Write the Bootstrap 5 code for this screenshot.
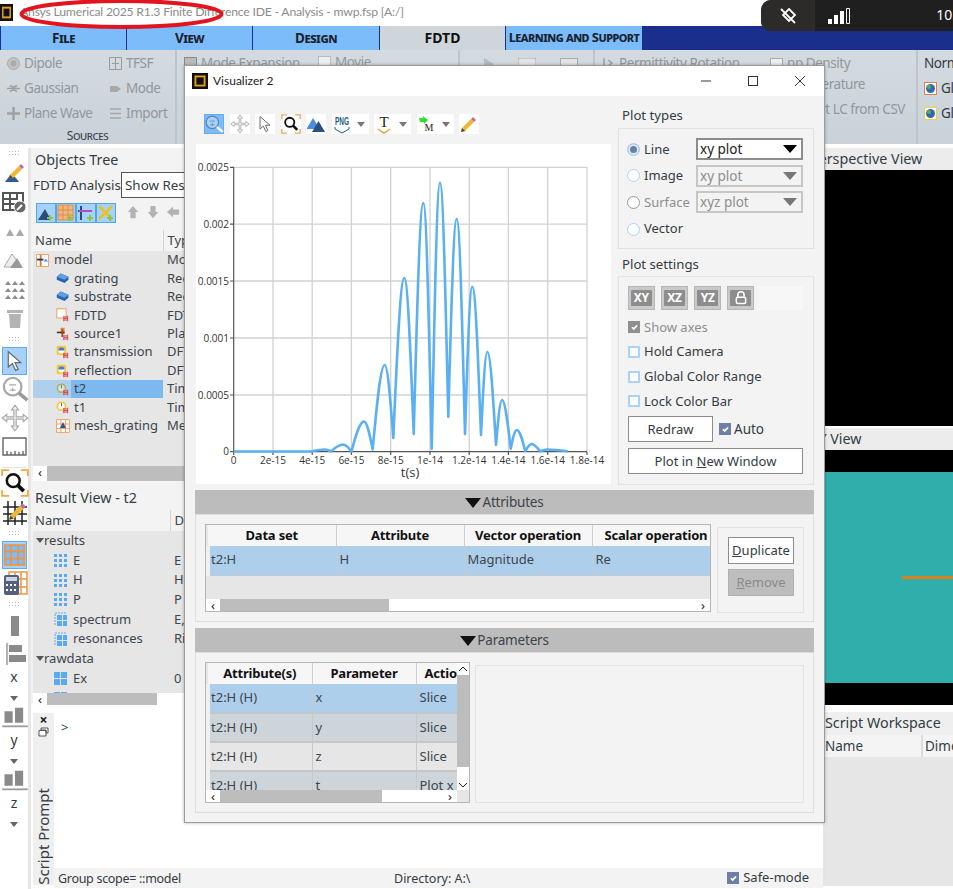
<!DOCTYPE html>
<html lang="en">
<head>
<meta charset="UTF-8" />
<meta name="viewport" content="width=device-width, initial-scale=1" />
<title>Ansys Lumerical - Visualizer</title>
<link href="https://cdn.jsdelivr.net/npm/bootstrap@5.3.0/dist/css/bootstrap.min.css" rel="stylesheet" />
<style>
  html, body { height: 100%; }
  body { width: 953px; height: 889px; overflow: hidden; position: relative; background: #fff; color: #333c44; font-family: "Noto Sans", sans-serif; font-size: 13px; line-height: 1.2; }
  svg { display: block; flex: none; }

  /* main window chrome */
  .titlebar { height: 26px; padding-bottom: 2px; font-family: Lato, sans-serif; font-size: 12.2px; letter-spacing: -.2px; color: #8b8b8b; gap: 7px; }
  .app-tabs { height: 24px; background: #1a2f8c; padding-left: 1px; }
  .app-tab { width: 125px; flex: none; margin-right: 1px; background: #7dbcfa; color: #17222e; font-weight: 700; font-variant: small-caps; font-size: 13.5px; letter-spacing: -.5px; }
  .app-tab:nth-child(3) { width: 126px; }
  .app-tab.active { background: #ced6dc; color: #111; font-variant: normal; font-size: 14px; letter-spacing: 0; }
  .app-tab.wide { width: 136px; white-space: nowrap; font-size: 13px; letter-spacing: -.55px; }
  .ribbon { height: 94px; background: linear-gradient(#d4dbe0, #c9d2d9); color: #92979b; font-size: 13.5px; letter-spacing: -.45px; }
  .rib-group { height: 94px; flex: none; border-right: 2px solid #bcc5cc; position: relative; }
  .rib-sources { width: 177px; }
  .rib-modes { width: 283px; }
  .rib-play { width: 135px; }
  .rib-perm { width: 323px; }
  .rib-item { height: 25px; white-space: nowrap; }
  .rib-item:first-child { margin-top: 1px; }
  .rib-label { position: absolute; left: 0; right: 0; bottom: 0; text-align: center; color: #3a444c; font-variant: small-caps; font-size: 12px; letter-spacing: -.4px; line-height: 17px; }
  .rib-col1 { width: 109px; padding-left: 7px; }
  .rib-mode1 { width: 134px; margin-left: 7px; }
  .perm-a { width: 175px; padding-left: 8px; }
  .perm-t { width: 270px; text-align: right; }
  .perm-i { width: 310px; text-align: right; }
  .rib-norm { flex: none; color: #333c44; padding-left: 6px; }
  .work { height: 745px; border-top: 4px solid #fff; }

  /* left tool strip */
  .tools { width: 31px; border-right: 3px solid #e6e6e6; }
  .tool { height: 28.8px; width: 28px; margin-left: 1px; }
  .tool.on { height: 28px; width: 25px; margin-left: 2px; background: #a6d1f8; box-shadow: inset 0 0 0 1px #5cacef; }
  .tool-grip { height: 7px; width: 12px; margin: 3.5px 0 3.5px 8px; background: radial-gradient(#bbb 40%, transparent 45%) 0 0 / 3px 3px; }
  .tool-grip:first-child { margin-top: 1.500px; margin-bottom: 3.500px; }
  .tool-line { height: 7px; width: 24px; margin-left: 2px; border-bottom: 1px solid #e2e2e2; margin-bottom: 1px; }
  .tool-letter { font-size: 14px; height: 20px; width: 28px; text-align: center; }
  .caret-s { width: 0; height: 0; border: 4px solid transparent; border-top: 5px solid #666; border-bottom: 0; margin: 7px auto 2px; }

  /* docks */
  .dock { width: 153px; padding-left: 2px; background: #f3f3f3; overflow: hidden; }
  .dock-title { font-size: 14.3px; padding-left: 2px; height: 24px; line-height: 24px; }
  .dock-tabs { height: 27px; font-size: 13.4px; }
  .dock-tab { padding-top: 5px; width: 88px; white-space: nowrap; flex: none; }
  .dock-tab.res { width: 70px; height: 26px; border: 1px solid #555; background: #fff; padding: 4px 0 0 3px; overflow: hidden; }
  .dock-bar { height: 31px; padding: 4px 0 0 3px; }
  .add-btn { width: 20px; height: 20px; flex: none; background: #a6d1f8; box-shadow: inset 0 0 0 1px #4ea6ee; }
  .move-btns { margin-left: 10px; gap: 6px; }
  .tree { width: 260px; table-layout: fixed; margin: 0; font-size: 13px; }
  .tree > * > tr > * { border: 0; padding: 0; background: transparent; font-weight: 400; color: #3c454c; box-shadow: none; white-space: nowrap; overflow: hidden; vertical-align: middle; }
  .tree > * > tr > *:nth-child(2) { padding-left: 4px; }
  .tree thead th { background: #f3f3f3; height: 21px; padding-left: 2px; border-right: 1px solid #d4d4d4; }
  .tree-wrap { background: #e6e6e6; overflow: hidden; }
  .objects { height: 236px; }
  .objects tbody td { height: 18.4px; }
  .results { height: 183px; }
  .results tbody td { height: 19.7px; }
  .col-obj { width: 130px; }
  .col-res { width: 137px; }
  .tree .sel { background: linear-gradient(90deg, #aed0ec 38px, #7cb9ef 38px); }
  .lvl0 { padding-left: 3px; gap: 5px; }
  .lvl1 { padding-left: 23px; gap: 4px; }
  .grp { padding-left: 3px; }
  .data { padding-left: 20px; gap: 5px; }
  .tw { width: 0; height: 0; border: 4px solid transparent; border-top: 5px solid #555; border-bottom: 0; }
  .hbar { height: 15px; background: #fff; }
  .hbar.sm { height: 12px; }
  .hbar .arrow { width: 14px; text-align: center; font-size: 13px; line-height: 12px; color: #222; flex: none; }
  .hbar .thumb { background: #bdbdbd; }
  .thumb-r { width: 110px; }
  .thumb-a { width: 169px; }
  .thumb-p { width: 162px; }
  .splitter { height: 5px; }
  .console-row { margin-top: 8px; }
  .console { height: 155px; padding: 7px 0 0 7px; }
  .prompt-side { width: 21px; background: #efefef; position: relative; margin-left: 2px; height: 172px; flex: none; }
  .prompt-vert { position: absolute; bottom: 0; left: 0; width: 21px; writing-mode: vertical-rl; transform: rotate(180deg); font-size: 15px; line-height: 21px; white-space: nowrap; }
  .prompt-close { font-size: 14px; font-weight: 700; color: #222; text-align: center; line-height: 14px; }
  .statusbar { height: 20px; background: #f3f3f3; font-size: 13px; padding: 0 14px 0 4px; }
  .st-scope { width: 336px; flex: none; font-size: 12.5px; letter-spacing: -.3px; }
  .st-dir { font-size: 12.5px; }
  .st-safe { margin-left: auto; gap: 4px; }

  /* right docks */
  .right { width: 130px; }
  .view-head { height: 22px; line-height: 22px; background: #ececec; font-size: 14.3px; white-space: nowrap; }
  .view-head span { margin-left: -13px; }
  .black { background: #000; }
  .p-view { height: 256px; margin-bottom: 2px; }
  .x-view { height: 255px; padding: 22px 0; }
  .teal { height: 211px; background: #30aeac; position: relative; }
  .teal i { position: absolute; left: 79px; right: 0; top: 104px; height: 3px; background: #d9801f; }
  .ws { margin-top: 7px; border-left: 2px solid #e4e4e4; }
  .ws-title { height: 23px; line-height: 22px; font-size: 14.3px; background: #efefef; white-space: nowrap; }
  .ws-head { height: 22px; line-height: 22px; background: #f4f4f4; white-space: nowrap; overflow: hidden; font-size: 13.5px; }
  .ws-head div:first-child { width: 98px; flex: none; border-right: 2px solid #ddd; }
  .ws-head div:last-child { padding-left: 2px; }
  .ws-body { height: 129px; background: #e6e6e6; }

  /* floating window */
  .win { position: absolute; left: 184px; top: 65px; width: 641px; height: 758px; background: #f3f3f3; border: 1px solid #9c9c9c; box-shadow: 0 0 3px rgba(0,0,0,.3); }
  .win-title { height: 30px; background: #fff; font-family: Lato, sans-serif; font-size: 12px; color: #222; padding-left: 7px; gap: 5px; }
  .win-ctrl { margin-left: auto; gap: 33px; padding-right: 17px; }
  .win-body { padding: 0 10px; }
  .win-top { height: 394px; }
  .plot-col { width: 416px; padding-left: 1px; flex: none; }
  .v-tools { height: 20px; margin: 18px 0 10px 8px; gap: 5.5px; }
  .v-tool { height: 20px; width: 20px; background: #fff; }
  .v-tool.on { background: #7dbcfa; box-shadow: inset 0 0 0 1px #62aef0; }
  .v-tool.split { width: 37px; gap: 5px; }
  .v-tool .drop { width: 0; height: 0; border: 4px solid transparent; border-top: 5px solid #777; border-bottom: 0; margin-top: 1px; }
  .plot { width: 415px; height: 340px; background: #fff; }
  .chart-txt { font-family: "Open Sans", sans-serif; font-size: 10px; fill: #333; }
  .side-col { width: 196px; margin-left: 7px; flex: none; }
  .gb-label { height: 21px; padding: 2px 0 0 4px; font-size: 13.2px; }
  .gb-types { margin-top: 11px; padding-top: 1px; }
  .gb { border: 1px solid #e2e2e2; }
  .types-box { height: 121px; padding: 7px 10px 0 8px; margin-bottom: 6px; }
  .type-row { height: 26.6px; }
  .type-row label { width: 52px; flex: none; margin-left: 4px; }
  .win .form-check-input { margin: 0; float: none; width: 13px; height: 13px; flex: none; background-color: #fff; border: 1px solid #a9d4f7; border-radius: 50%; opacity: 1; }
  .win .form-check-input.grey { border-color: #999; }
  .win .form-check-input:checked { background-image: none; background-color: #6d7fa4; box-shadow: inset 0 0 0 2px #dcecfa; border-color: #a9d4f7; }
  .win .form-check-input[type=checkbox], .statusbar .form-check-input { border-radius: 0; width: 12px; height: 12px; margin: 0; float: none; flex: none; }
  .win .form-check-input.boxed { background-color: #fff; border: 2px solid #a9d4f7; }
  .chk-on, .statusbar .form-check-input { background-color: #6d7fa4 !important; border: 1px solid #6d7fa4 !important; box-shadow: none !important; opacity: 1; background-size: 11px; background-image: url("data:image/svg+xml,%3csvg xmlns='http://www.w3.org/2000/svg' viewBox='0 0 20 20'%3e%3cpath fill='none' stroke='%23fff' stroke-width='3' d='m6 10 3 3 6-6'/%3e%3c/svg%3e") !important; }
  .chk-off { background-color: #8f8f8f !important; border-color: #8f8f8f !important; }
  .win .form-select { width: 107px; height: 22px; padding: 0 0 0 2px; font-size: 13.5px; line-height: 18px; color: #222; border: 2px solid #8c8c8c; border-radius: 0; box-shadow: none; background-color: #fff; background-size: 16px 10px; background-position: right 3px center; background-image: url("data:image/svg+xml,%3csvg xmlns='http://www.w3.org/2000/svg' viewBox='0 0 16 10'%3e%3cpath d='M1 1h14L8 9z'/%3e%3c/svg%3e"); }
  .win .form-select:disabled { color: #8e8e8e; background-color: #f3f3f3; border-color: #c6c6c6; background-image: url("data:image/svg+xml,%3csvg xmlns='http://www.w3.org/2000/svg' viewBox='0 0 16 10'%3e%3cpath fill='%23777' d='M1 1h14L8 9z'/%3e%3c/svg%3e"); }
  .muted { color: #8e8e8e; }
  .settings-box { height: 209px; padding: 9px 10px 0 9px; }
  .axis-btns { gap: 6.5px; height: 25px; margin-bottom: 4px; }
  .axis-btn, .axis-btn:disabled { width: 27px; height: 24px; background: #c9c9c9; border: 1px solid #b6b6b6; border-radius: 0; padding: 0; opacity: 1; }
  .axis-btn span { display: block; background: #8d8d8d; color: #fff; font-weight: 700; font-size: 12px; line-height: 14px; width: 21px; padding: 1px 0; border-radius: 1px; letter-spacing: -.3px; }
  .axis-btn span svg { margin: 0 auto; }
  .axis-rest { width: 46px; height: 24px; margin-left: -3px; background: #f7f7f7; }
  .set-row { height: 24.7px; gap: 4px; }
  .win .btn-plot { background: #fff; border: 1px solid #8c8c8c; border-radius: 0; color: #333c44; font-size: 13px; padding: 0; line-height: 24px; height: 26px; }
  .redraw { width: 85px; margin-top: 2px; flex: none; }
  .newwin { width: 175px; margin-top: 6px; }
  .auto { gap: 3px; margin: 2px 0 0 6px; font-size: 13.5px; }

  .bar { height: 24px; background: #bcbcbc; gap: 1px; font-size: 13.5px; letter-spacing: -.2px; color: #3c444a; }
  .bar i { width: 0; height: 0; border: 8.500px solid transparent; border-top: 10px solid #111; border-bottom: 0; margin-top: 1px; }
  .pane { border: 1px solid #dedede; padding: 9px; }
  .attrs { height: 108px; }
  .params { height: 161px; }
  .sec-gap { margin-top: 6px; }
  .grid-box { border: 1px solid #b5b5b5; background: #e6e6e6; overflow: hidden; position: relative; flex: none; }
  .attrs .grid-box { width: 506px; height: 88px; }
  .params .grid-box { width: 265px; height: 141px; }
  .gt { table-layout: fixed; margin: 0; font-size: 13px; }
  .gt > * > tr > * { border: 0; border-right: 1px solid #c3cbd1; background: transparent; box-shadow: none; padding: 0 0 0 3px; color: #3c454c; white-space: nowrap; overflow: hidden; vertical-align: middle; }
  .gt thead th { background: #f6f6f6; height: 21px; font-weight: 700; text-align: center; color: #111; border-right: 1px solid #cfcfcf; padding: 0; letter-spacing: -.2px; }
  .gt thead th.last { text-align: left; padding-left: 12px; border-right: 0; }
  .params .gt thead th.last { padding-left: 8px; }
  .gt > tbody > tr > td:first-child { border-left: 4px solid #f0f0f0; padding-left: 1px; }
  .gt tbody tr.s > * { background: #aecfec; }
  .gt tbody tr.g > * { background: #cdd5da; }
  .gt tbody tr.l > * { background: #e6e6e6; }
  .gt tbody td { height: 29px; border-bottom: 2px solid #c3c7ca; }
  .attrs .gt { width: 504px; }
  .attrs .gt tbody td { height: 29px; border-bottom: 1px solid #c3cbd1; }
  .params .gt { width: 252px; }
  .c128a { width: 128px; }
  .c128 { width: 128px; }
  .c120 { width: 120px; }
  .c104a { width: 104px; }
  .c104 { width: 104px; }
  .c44 { width: 44px; }
  .grid-box .hbar { position: absolute; left: 0; bottom: 0; height: 12px; right: 0; }
  .params .hbar { right: 12px; }
  .vbar { position: absolute; right: 0; top: 0; bottom: 12px; width: 12px; background: #fff; }
  .vbar b { display: block; height: 92px; margin-top: 12px; background: #bdbdbd; }
  .vbar svg { position: absolute; left: 1px; }
  .vbar .up { top: 3px; }
  .vbar .dn { bottom: 2px; }
  .corner { position: absolute; right: 0; bottom: 0; width: 12px; height: 12px; background: #e6e6e6; }
  .dup-box { width: 87px; height: 86px; margin: 3px 0 0 6px; padding: 9px 0 0 10px; flex: none; }
  .dup-box .btn { display: block; width: 66px; height: 27px; padding: 0; line-height: 25px; border-radius: 0; font-size: 13px; margin-bottom: 5px; white-space: nowrap; }
  .btn-dup { background: #fff; border: 1px solid #8c8c8c; color: #333c44; }
  .btn-rem:disabled { background: #bdbdbd; border: 1px solid #b0b0b0; color: #8a8a8a; opacity: 1; }
  .par-box { width: 329px; height: 138px; margin: 3px 0 0 5px; flex: none; }

  /* overlays */
  .tray { position: absolute; right: 0; top: 0; width: 192px; height: 31px; background: #1f1f1f; border-radius: 10px 0 0 10px; color: #fff; font-size: 14px; overflow: hidden; }
  .tray-a { width: 54px; height: 31px; background: #2c2b29; }
  .tray-b { margin-left: 13px; }
  .tray-time { margin-left: auto; margin-right: -3px; }
  .oval { position: absolute; left: 10px; top: 0; }
</style>
</head>
<body>

<svg width="0" height="0" class="position-absolute">
  <defs>
    <g id="lum"><rect width="14" height="14" fill="#111"/><rect x="3" y="3" width="8" height="8" fill="none" stroke="#e5a11c" stroke-width="1.6"/></g>
    <path id="badge" d="M10 10v7M15 10v7M10 13.5h5M10 11.5h5M10 15.5h5" stroke="#d8424c" stroke-width="1.2" fill="none"/>
    <symbol id="i-slab" viewBox="0 0 18 18"><path d="M1 6 6 2l10 4v4l-5 4L1 10Z" fill="#2a64b4"/><path d="M1 6 6 2l10 4-5 4Z" fill="#5f9fe2"/></symbol>
    <symbol id="i-fdtd" viewBox="0 0 18 18"><path d="M1 1h12v12H1z" fill="#fff" stroke="#f0a060" stroke-width="1.3"/><use href="#badge"/></symbol>
    <symbol id="i-src" viewBox="0 0 18 18"><path d="M6 1h5v8H6z" fill="#e8882c"/><path d="M1 6h10v2H1z" fill="#334"/><path d="M8 3v10" stroke="#a34a1c" stroke-width="2"/><use href="#badge"/></symbol>
    <symbol id="i-mon" viewBox="0 0 18 18"><rect x="1" y="1" width="12" height="12" rx="2" fill="#f5c52e"/><circle cx="7" cy="7" r="4" fill="#fff"/><path d="M3 7a4 4 0 0 1 8 0" fill="#3f7fd0"/><use href="#badge"/></symbol>
    <symbol id="i-time" viewBox="0 0 18 18"><circle cx="7" cy="8" r="5.2" fill="#fff" stroke="#f5c52e" stroke-width="2"/><path d="M7 8V4" stroke="#333"/><use href="#badge"/></symbol>
    <symbol id="i-time2" viewBox="0 0 18 18"><circle cx="7" cy="8" r="5.2" fill="#d8e6d8" stroke="#a8b06a" stroke-width="2"/><path d="M7 8V4" stroke="#556"/><use href="#badge"/></symbol>
    <symbol id="i-model" viewBox="0 0 14 14"><rect x=".6" y=".6" width="12.8" height="12.8" fill="#fff" stroke="#f0a060"/><path d="M5 1v12" stroke="#e07820" stroke-width="2"/><path d="M1 6h7" stroke="#1f3a70" stroke-width="2"/><path d="m8 8 2.500-3L13 8Z" fill="#4f8fd8"/></symbol>
    <symbol id="i-mesh" viewBox="0 0 14 14"><path d="M.6.6h12.800v12.800H.6zM5 1v12M9.500 1v12M1 5h12M1 9.500h12" fill="#fff" stroke="#f0a060"/><path d="m4 9 3-6 3 6Z" fill="#2b5596"/></symbol>
    <symbol id="i-d3" viewBox="0 0 15 15"><path d="M1 1h3v3H1zM6 1h3v3H6zM11 1h3v3h-3zM1 6h3v3H1zM6 6h3v3H6zM11 6h3v3h-3zM1 11h3v3H1zM6 11h3v3H6zM11 11h3v3h-3z" fill="#5aa9f5"/></symbol>
    <symbol id="i-d2s" viewBox="0 0 15 15"><path d="M4 3h5v5H4zM10 3h4v5h-4zM4 9h5v5H4zM10 9h4v5h-4z" fill="#5aa9f5"/><path d="M2 13V1h11" fill="none" stroke="#5aa9f5" stroke-dasharray="2 1"/></symbol>
    <symbol id="i-d2" viewBox="0 0 15 15"><path d="M1 1h6v6H1zM8 1h6v6H8zM1 8h6v6H1zM8 8h6v6H8z" fill="#5aa9f5"/></symbol>
    <symbol id="i-mag" viewBox="0 0 24 24"><circle cx="10" cy="10" r="7.500" fill="none" stroke="#aaa" stroke-width="2"/><path d="m15.500 15.500 7 6" stroke="#999" stroke-width="3"/><path d="M7 8.500h6M10 11v3M7.500 13h5" stroke="#aaa"/></symbol>
    <symbol id="i-mag-on" viewBox="0 0 24 24"><circle cx="10" cy="10" r="7.500" fill="#a6d1f8" stroke="#5a87b0" stroke-width="1.500"/><path d="m15.500 15.500 7 6" stroke="#fff" stroke-width="3"/><path d="M7 8.500h6M10 11v3M7.500 13h5" stroke="#5a87b0"/></symbol>
    <symbol id="i-arrow" viewBox="0 0 24 24"><path d="M6 3v15l4-3.500 3 6.500 2.500-1-3-6.500h5.500Z" fill="#fff" stroke="#6c6c6c" stroke-width="1.200"/></symbol>
    <symbol id="i-move" viewBox="0 0 24 24"><path d="M12 1l3 4h-2v6h6V9l4 3-4 3v-2h-6v6h2l-3 4-3-4h2v-6H5v2l-4-3 4-3v2h6V5H9Z" fill="#f4f4f4" stroke="#aaa"/></symbol>
    <symbol id="i-zoomf" viewBox="0 0 24 24"><path d="M1 6V1h6M17 1h6v5M1 18v5h6M17 23h6v-5" fill="none" stroke="#f0a84a" stroke-width="1.600"/><circle cx="10.500" cy="10" r="5.500" fill="#fff" stroke="#111" stroke-width="2.200"/><path d="m14.500 14 5 5" stroke="#111" stroke-width="3.200"/></symbol>
    <symbol id="i-peaks" viewBox="0 0 20 20"><path d="m1 14 6-10 5 8-2 3H1Z" fill="#4d8de0"/><path d="m6 18 6.500-11L19 18Z" fill="#2c4f7e"/></symbol>
    <symbol id="i-pencil" viewBox="0 0 20 20"><path d="m3 14 9-9 3 3-9 9-4 1Z" fill="#f2b632"/><path d="m12 5 2-2 3 3-2 2Z" fill="#c46aa0"/><path d="m2 18 1-4 3 3Z" fill="#444"/></symbol>
    <symbol id="i-bar" viewBox="0 0 24 24"><path d="M3 17h7V7H3zM12 17h7V4h-7z" fill="#8a8a8a"/><path d="M1 20h22" stroke="#999" stroke-width="1.500"/></symbol>
  </defs>
</svg>

<div class="d-flex flex-column">
  <div class="titlebar d-flex align-items-center">
    <svg width="13" height="17" viewBox="0 0 14 14" preserveAspectRatio="none"><use href="#lum"/></svg>
    <span>Ansys Lumerical 2025 R1.3 Finite Difference IDE - Analysis - mwp.fsp [A:/]</span>
  </div>

  <div class="app-tabs d-flex">
    <div class="app-tab d-flex align-items-center justify-content-center">File</div>
    <div class="app-tab d-flex align-items-center justify-content-center">View</div>
    <div class="app-tab d-flex align-items-center justify-content-center">Design</div>
    <div class="app-tab active d-flex align-items-center justify-content-center">FDTD</div>
    <div class="app-tab wide d-flex align-items-center justify-content-center">Learning and Support</div>
  </div>

  <div class="ribbon d-flex">
    <div class="rib-group rib-sources d-flex">
      <div class="rib-col1">
        <div class="rib-item d-flex align-items-center gap-1"><svg width="13" height="13" viewBox="0 0 13 13"><circle cx="6.500" cy="6.500" r="6" fill="#c4c4c4" stroke="#a8a8a8"/><circle cx="6.500" cy="6.500" r="3" fill="#aaa"/></svg>Dipole</div>
        <div class="rib-item d-flex align-items-center gap-1"><svg width="13" height="13" viewBox="0 0 13 13"><path d="M0 6.500h13M3 3.500c3 2 4 2 7 0M3 9.500c3-2 4-2 7 0" stroke="#a0a0a0" stroke-width="1.600" fill="none"/></svg>Gaussian</div>
        <div class="rib-item d-flex align-items-center gap-1"><svg width="13" height="13" viewBox="0 0 13 13"><path d="M0 6.500h13M6.500 0v13" stroke="#a0a0a0" stroke-width="2.400"/></svg>Plane Wave</div>
      </div>
      <div>
        <div class="rib-item d-flex align-items-center gap-1"><svg width="13" height="13" viewBox="0 0 13 13"><path d="M.5.500h12v12H.500zM6.500 1v11M3 6.500h7" fill="none" stroke="#9c9c9c"/></svg>TFSF</div>
        <div class="rib-item d-flex align-items-center gap-1"><svg width="13" height="13" viewBox="0 0 13 13"><path d="M1 4h7l4 3-4 3H1Z" fill="#a8a8a8"/></svg>Mode</div>
        <div class="rib-item d-flex align-items-center gap-1"><svg width="13" height="13" viewBox="0 0 13 13"><path d="M1 2h11M1 6.500h11M1 11h11" stroke="#a6a6a6" stroke-width="1.500"/></svg>Import</div>
      </div>
      <div class="rib-label">Sources</div>
    </div>
    <div class="rib-group rib-modes d-flex">
      <div class="rib-item rib-mode1 d-flex align-items-center gap-1"><svg width="13" height="13"><rect x=".5" y=".5" width="12" height="12" fill="#bbb" stroke="#888"/></svg>Mode Expansion</div>
      <div class="rib-item d-flex align-items-center gap-1"><svg width="13" height="13"><rect x=".5" y=".5" width="12" height="12" fill="#eee" stroke="#bbb"/></svg>Movie</div>
    </div>
    <div class="rib-group rib-play d-flex gap-4 pt-2 ps-4">
      <svg width="10" height="12" viewBox="0 0 10 12"><path d="M0 0l10 6-10 6Z" fill="#b4bbc0"/></svg>
      <svg width="18" height="14"><rect width="18" height="14" rx="2" fill="#e4e4e4" stroke="#aaa"/></svg>
      <svg width="18" height="14"><rect x=".5" y=".5" width="17" height="13" fill="#e4e4e4" stroke="#aaa"/></svg>
    </div>
    <div class="rib-group rib-perm">
      <div class="rib-item d-flex align-items-center">
        <div class="perm-a d-flex align-items-center gap-1"><svg width="12" height="13" viewBox="0 0 12 13"><path d="M1 1v11M5 3l4 3-4 3" stroke="#9a9a9a" fill="none" stroke-width="1.400"/></svg>Permittivity Rotation</div>
        <svg class="me-1" width="13" height="11"><rect x=".5" y=".5" width="12" height="10" fill="#eee" stroke="#aaa"/></svg><span>np Density</span>
      </div>
      <div class="rib-item"><div class="perm-t">Temperature</div></div>
      <div class="rib-item"><div class="perm-i">Import LC from CSV</div></div>
    </div>
    <div class="rib-norm">
      <div class="rib-item d-flex align-items-center">Norm</div>
      <div class="rib-item d-flex align-items-center gap-1"><svg width="13" height="13"><rect x=".5" y=".5" width="12" height="12" fill="#fff" stroke="#e07f4a"/><circle cx="6.500" cy="6.500" r="4.500" fill="#2d6bb5"/><circle cx="5" cy="5" r="2" fill="#6aa84f"/></svg>Gl</div>
      <div class="rib-item d-flex align-items-center gap-1"><svg width="13" height="13"><rect x=".5" y=".5" width="12" height="12" fill="#fff" stroke="#efd23a"/><circle cx="6.500" cy="6.500" r="4.500" fill="#2d6bb5"/><circle cx="5" cy="5" r="2" fill="#6aa84f"/></svg>Gl</div>
    </div>
  </div>

  <div class="work d-flex">
    <div class="tools flex-shrink-0">
      <div class="tool-grip"></div>
      <div class="tool"><svg width="28" height="26" viewBox="0 0 28 26"><path d="m4 22 6-8 5 4 3 4Z" fill="#335a8e"/><use href="#i-pencil" x="6" y="1" width="20" height="20"/></svg></div>
      <div class="tool"><svg width="28" height="28" viewBox="0 0 28 28"><path d="M2 4h20v17H2zM2 10h15M2 15h12M9 4v17M16 4v6" fill="#fff" stroke="#555" stroke-width="2"/><circle cx="19" cy="18" r="6" fill="#666" stroke="#fff"/><path d="m16 21 5-5" stroke="#fff" stroke-width="2"/></svg></div>
      <div class="tool"><svg width="28" height="28" viewBox="0 0 28 28"><path d="m5 18 4-7 4 7ZM15 18l4-7 4 7Z" fill="#aaa"/></svg></div>
      <div class="tool"><svg width="28" height="28" viewBox="0 0 28 28"><path d="m3 21 8-13 6 8-4 5Z" fill="#eee" stroke="#aaa"/><path d="m9 22 7-10 6 10Z" fill="#999"/></svg></div>
      <div class="tool"><svg width="28" height="28" viewBox="0 0 28 28"><path d="m4 10 3-4 3 4Zm7 0 3-4 3 4Zm7 0 3-4 3 4ZM4 17l3-4 3 4Zm7 0 3-4 3 4Zm7 0 3-4 3 4ZM4 24l3-4 3 4Zm7 0 3-4 3 4Zm7 0 3-4 3 4Z" fill="#8c8c8c"/></svg></div>
      <div class="tool"><svg width="28" height="28" viewBox="0 0 28 28"><path d="M6 6h16v3H6zM8 10h12l-1 14H9Z" fill="#b4b4b4"/></svg></div>
      <div class="tool-grip"></div>
      <div class="tool on"><svg width="25" height="28" viewBox="0 0 24 27"><use href="#i-arrow" width="24" height="27"/></svg></div>
      <div class="tool"><svg width="28" height="28"><use href="#i-mag"/></svg></div>
      <div class="tool"><svg width="28" height="28"><use href="#i-move"/></svg></div>
      <div class="tool"><svg width="28" height="28" viewBox="0 0 28 28"><path d="M2 6h23v17H2zM6 23v-4M10 23v-3M14 23v-4M18 23v-3M22 23v-4" fill="#fff" stroke="#666" stroke-width="1.400"/></svg></div>
      <div class="tool-line"></div>
      <div class="tool"><svg width="28" height="28"><use href="#i-zoomf"/></svg></div>
      <div class="tool"><svg width="28" height="28" viewBox="0 0 28 28"><path d="M2 9h24M2 16h24M2 23h24M7 3v24M14 3v24M21 3v24" stroke="#222" stroke-width="1.500"/><use href="#i-pencil" x="6" y="2" width="22" height="22"/></svg></div>
      <div class="tool-grip"></div>
      <div class="tool on"><svg width="25" height="28" viewBox="0 0 28 28"><path d="M3 3h22v22H3zM10 3v22M18 3v22M3 10h22M3 18h22" fill="#7dbcfa" stroke="#eb9545" stroke-width="2"/></svg></div>
      <div class="tool"><svg width="28" height="28" viewBox="0 0 28 28"><path d="M8 3h18v22H8zM14 3v22M20 3v22M8 10h18M8 18h18" fill="#fff" stroke="#eb9545" stroke-width="1.500"/><rect x="3" y="6" width="15" height="20" rx="2" fill="#53617c"/><path d="M5 8h11v4H5z" fill="#cfd6e2"/><path d="M5 15h2v2H5zM9 15h2v2H9zM13 15h2v2h-2zM5 20h2v2H5zM9 20h2v2H9zM13 20h2v2h-2z" fill="#fff"/></svg></div>
      <div class="tool-grip"></div>
      <div class="tool"><svg width="28" height="28" viewBox="0 0 28 28"><path d="M10 4h8v20h-8z" fill="#8a8a8a"/></svg></div>
      <div class="tool"><svg width="28" height="28" viewBox="0 0 28 28"><path d="M6 3v22" stroke="#999" stroke-width="1.500"/><path d="M8 5h13v7H8zM8 15h17v7H8z" fill="#8a8a8a"/></svg></div>
      <div class="tool-letter">x</div><div class="caret-s"></div>
      <div class="tool"><svg width="28" height="28"><use href="#i-bar"/></svg></div>
      <div class="tool-letter">y</div><div class="caret-s"></div>
      <div class="tool"><svg width="28" height="28"><use href="#i-bar"/></svg></div>
      <div class="tool-letter">z</div><div class="caret-s"></div>
    </div>

    <div class="flex-grow-1 d-flex flex-column">
      <div class="dock">
        <div class="dock-title">Objects Tree</div>
        <div class="dock-tabs d-flex">
          <div class="dock-tab">FDTD Analysis</div>
          <div class="dock-tab res">Show Result</div>
        </div>
        <div class="dock-bar d-flex">
          <div class="add-btn"><svg width="20" height="20" viewBox="0 0 20 20"><path d="m2 17 7-11 6 11Z" fill="#2b4b7e"/><path d="M14 12v6M11 15h6" stroke="#8fc641" stroke-width="2"/></svg></div>
          <div class="add-btn"><svg width="20" height="20" viewBox="0 0 20 20"><path d="M2 2h15v15H2zM7 2v15M12 2v15M2 7h15M2 12h15" fill="#e9b88a" stroke="#e58a3c"/><path d="M14 12v6M11 15h6" stroke="#8fc641" stroke-width="2"/></svg></div>
          <div class="add-btn"><svg width="20" height="20" viewBox="0 0 20 20"><path d="M5 3v14M2 8h14" stroke="#2b4b7e" stroke-width="2"/><path d="M3 8h13" stroke="#b04ac8" stroke-width="2"/><path d="M14 12v6M11 15h6" stroke="#8fc641" stroke-width="2"/></svg></div>
          <div class="add-btn"><svg width="20" height="20" viewBox="0 0 20 20"><path d="m3 3 13 13M16 3 3 16" stroke="#e8c21f" stroke-width="2.500"/><path d="M14 12v6M11 15h6" stroke="#8fc641" stroke-width="2"/></svg></div>
          <div class="move-btns d-flex">
            <svg width="14" height="18" viewBox="0 0 16 18"><path d="M8 2l6 7h-3v7H5V9H2Z" fill="#b3b3b3"/></svg>
            <svg width="14" height="18" viewBox="0 0 16 18"><path d="M8 16 2 9h3V2h6v7h3Z" fill="#b3b3b3"/></svg>
            <svg width="14" height="18" viewBox="0 0 16 18"><path d="M1 9l7-6v3h7v6H8v3Z" fill="#b3b3b3"/></svg>
          </div>
        </div>
        <div class="tree-wrap objects">
          <table class="table tree">
            <colgroup><col class="col-obj" /><col /></colgroup>
            <thead><tr><th>Name</th><th>Type</th></tr></thead>
            <tbody>
              <tr><td><div class="d-flex align-items-center lvl0"><svg width="13" height="13"><use href="#i-model"/></svg>model</div></td><td>Model</td></tr>
              <tr><td><div class="d-flex align-items-center lvl1"><svg width="14" height="14"><use href="#i-slab"/></svg>grating</div></td><td>Rectangle</td></tr>
              <tr><td><div class="d-flex align-items-center lvl1"><svg width="14" height="14"><use href="#i-slab"/></svg>substrate</div></td><td>Rectangle</td></tr>
              <tr><td><div class="d-flex align-items-center lvl1"><svg width="14" height="14"><use href="#i-fdtd"/></svg>FDTD</div></td><td>FDTD</td></tr>
              <tr><td><div class="d-flex align-items-center lvl1"><svg width="14" height="14"><use href="#i-src"/></svg>source1</div></td><td>Plane</td></tr>
              <tr><td><div class="d-flex align-items-center lvl1"><svg width="14" height="14"><use href="#i-mon"/></svg>transmission</div></td><td>DFT</td></tr>
              <tr><td><div class="d-flex align-items-center lvl1"><svg width="14" height="14"><use href="#i-mon"/></svg>reflection</div></td><td>DFT</td></tr>
              <tr><td class="sel"><div class="d-flex align-items-center lvl1"><svg width="14" height="14"><use href="#i-time2"/></svg>t2</div></td><td>Time</td></tr>
              <tr><td><div class="d-flex align-items-center lvl1"><svg width="14" height="14"><use href="#i-time"/></svg>t1</div></td><td>Time</td></tr>
              <tr><td><div class="d-flex align-items-center lvl1"><svg width="14" height="14"><use href="#i-mesh"/></svg>mesh_grating</div></td><td>Mesh</td></tr>
            </tbody>
          </table>
        </div>
        <div class="hbar d-flex"><div class="arrow">&lsaquo;</div><div class="thumb flex-grow-1"></div></div>
        <div class="splitter"></div>
        <div class="dock-title">Result View - t2</div>
        <div class="tree-wrap results">
          <table class="table tree">
            <colgroup><col class="col-res" /><col /></colgroup>
            <thead><tr><th>Name</th><th>Dimensions</th></tr></thead>
            <tbody>
              <tr><td><div class="d-flex align-items-center grp"><i class="tw"></i>results</div></td><td></td></tr>
              <tr><td><div class="d-flex align-items-center data"><svg width="15" height="15"><use href="#i-d3"/></svg>E</div></td><td>E vs</td></tr>
              <tr><td><div class="d-flex align-items-center data"><svg width="15" height="15"><use href="#i-d3"/></svg>H</div></td><td>H vs</td></tr>
              <tr><td><div class="d-flex align-items-center data"><svg width="15" height="15"><use href="#i-d3"/></svg>P</div></td><td>P vs</td></tr>
              <tr><td><div class="d-flex align-items-center data"><svg width="15" height="15"><use href="#i-d2s"/></svg>spectrum</div></td><td>E, H</td></tr>
              <tr><td><div class="d-flex align-items-center data"><svg width="15" height="15"><use href="#i-d2s"/></svg>resonances</div></td><td>Ri</td></tr>
              <tr><td><div class="d-flex align-items-center grp"><i class="tw"></i>rawdata</div></td><td></td></tr>
              <tr><td><div class="d-flex align-items-center data"><svg width="15" height="15"><use href="#i-d2"/></svg>Ex</div></td><td>0</td></tr>
              <tr><td><div class="d-flex align-items-center data"><svg width="15" height="15"><use href="#i-d2"/></svg>Ey</div></td><td>0</td></tr>
            </tbody>
          </table>
        </div>
        <div class="hbar sm d-flex"><div class="arrow">&lsaquo;</div><div class="thumb thumb-r"></div></div>
      </div>

      <div class="console-row d-flex flex-grow-1">
        <div class="prompt-side">
          <div class="prompt-close">&times;</div>
          <svg class="mx-auto" width="11" height="10" viewBox="0 0 11 10"><path d="M3 1h7v5H8V3H3zM1 3.500h7V9H1z" fill="#fff" stroke="#555"/></svg>
          <div class="prompt-vert">Script Prompt</div>
        </div>
        <div class="flex-grow-1 d-flex flex-column">
          <div class="console">&gt;</div>
          <div class="statusbar d-flex align-items-center">
            <span class="st-scope">Group scope= ::model</span><span class="st-dir">Directory: A:\</span>
            <span class="st-safe d-flex align-items-center"><input class="form-check-input m-0" type="checkbox" checked disabled />Safe-mode</span>
          </div>
        </div>
      </div>
    </div>

    <div class="right flex-shrink-0">
      <div class="view-head"><span>Perspective View</span></div>
      <div class="black p-view"></div>
      <div class="view-head"><span>XY View</span></div>
      <div class="black x-view"><div class="teal"><i></i></div></div>
      <div class="ws">
        <div class="ws-title">Script Workspace</div>
        <div class="ws-head d-flex"><div>Name</div><div>Dimensions</div></div>
        <div class="ws-body"></div>
      </div>
    </div>
  </div>
</div>

<!-- annotation drawn on the screenshot -->
<svg class="oval" width="224" height="32" viewBox="0 0 224 32"><ellipse cx="111.500" cy="14" rx="100" ry="13" fill="none" stroke="#e2141f" stroke-width="4"/></svg>

<div class="tray d-flex align-items-center">
  <div class="tray-a d-flex align-items-center justify-content-center">
    <svg width="18" height="18" viewBox="0 0 18 18"><path d="M2 2l14 14M10 2l6 6-6 6-6-6Z" fill="none" stroke="#fff" stroke-width="1.800"/></svg>
  </div>
  <svg class="tray-b" width="22" height="16" viewBox="0 0 22 16"><path d="M0 11h4v5H0zM6 7h4v9H6zM12 3h4v13h-4z" fill="#fff"/><path d="M18.500.500h3v15h-3z" fill="none" stroke="#fff"/></svg>
  <span class="tray-time">10.</span>
</div>

<div class="win d-flex flex-column">
  <div class="win-title d-flex align-items-center">
    <svg width="16" height="16" viewBox="0 0 14 14"><use href="#lum"/></svg>
    <span>Visualizer 2</span>
    <div class="win-ctrl d-flex align-items-center">
      <svg width="14" height="14" viewBox="0 0 14 14"><path d="M2 7h10" stroke="#333"/></svg>
      <svg width="14" height="14" viewBox="0 0 14 14"><rect x="2.500" y="2.500" width="9" height="9" fill="none" stroke="#333"/></svg>
      <svg width="14" height="14" viewBox="0 0 14 14"><path d="m2 2 10 10M12 2 2 12" stroke="#333"/></svg>
    </div>
  </div>

  <div class="win-body">
    <div class="win-top d-flex">
      <div class="plot-col">
        <div class="v-tools d-flex">
          <div class="v-tool on"><svg width="20" height="20"><use href="#i-mag-on"/></svg></div>
          <div class="v-tool"><svg width="20" height="20"><use href="#i-move"/></svg></div>
          <div class="v-tool"><svg width="20" height="20"><use href="#i-arrow"/></svg></div>
          <div class="v-tool"><svg width="20" height="20"><use href="#i-zoomf"/></svg></div>
          <div class="v-tool"><svg width="20" height="20"><use href="#i-peaks"/></svg></div>
          <div class="v-tool split d-flex align-items-center">
            <svg width="20" height="20" viewBox="0 0 20 20"><path d="M3 13v2l7 4 7-4v-2" fill="none" stroke="#1f5a86"/><text x="10" y="11" text-anchor="middle" font-size="10" font-weight="700" fill="#1f5a86" font-family="Liberation Sans, sans-serif" textLength="14" lengthAdjust="spacingAndGlyphs">PNG</text></svg><i class="drop"></i>
          </div>
          <div class="v-tool split d-flex align-items-center">
            <svg width="20" height="20" viewBox="0 0 20 20"><text x="10" y="13" text-anchor="middle" font-size="15" fill="#222" font-family="Liberation Serif, serif">T</text><path d="M4 15l6 4 6-4" fill="none" stroke="#f0a030" stroke-width="1.500"/></svg><i class="drop"></i>
          </div>
          <div class="v-tool split d-flex align-items-center">
            <svg width="20" height="20" viewBox="0 0 20 20"><path d="M2 4h4V2l5 4-4 4V8H3Z" fill="#2ee02e"/><text x="12" y="17" text-anchor="middle" font-size="10" fill="#222" font-family="Liberation Serif, serif">M</text></svg><i class="drop"></i>
          </div>
          <div class="v-tool"><svg width="20" height="20"><use href="#i-pencil"/></svg></div>
        </div>
        <div class="plot">
          <svg width="415" height="340" viewBox="196 144 415 340">
            <path d="M273 167.300V451.700M312.200 167.300V451.700M351.400 167.300V451.700M390.700 167.300V451.700M430 167.300V451.700M469.200 167.300V451.700M508.400 167.300V451.700M547.700 167.300V451.700M587 167.300V451.700M233.700 167.300H587M233.700 224.200H587M233.700 281H587M233.700 338H587M233.700 395H587" stroke="#d2d2d2" stroke-width="1.300" fill="none"/>
            <path d="M233.700 167.300V451.700H587M230 167.300h4M230 224.200h4M230 281h4M230 338h4M230 395h4M230 451.700h4M233.700 452v3M273 452v3M312.200 452v3M351.400 452v3M390.700 452v3M430 452v3M469.200 452v3M508.400 452v3M547.700 452v3M587 452v3" stroke="#555" stroke-width="1.200" fill="none"/>
            <path id="curve" fill="none" stroke="#5ab0f2" stroke-width="2.600" stroke-linejoin="round"/>
            <g class="chart-txt" text-anchor="end">
              <text x="229" y="171">0.0025</text><text x="229" y="228">0.002</text><text x="229" y="285">0.0015</text><text x="229" y="342">0.001</text><text x="229" y="399">0.0005</text><text x="229" y="455">0</text>
            </g>
            <g class="chart-txt" text-anchor="middle">
              <text x="233.700" y="464">0</text><text x="273" y="464">2e-15</text><text x="312.200" y="464">4e-15</text><text x="351.400" y="464">6e-15</text><text x="390.700" y="464">8e-15</text><text x="430" y="464">1e-14</text><text x="469.200" y="464">1.2e-14</text><text x="508.400" y="464">1.4e-14</text><text x="547.700" y="464">1.6e-14</text><text x="587" y="464">1.8e-14</text>
              <text x="410" y="477" font-size="13">t(s)</text>
            </g>
          </svg>
        </div>
      </div>

      <div class="side-col">
        <div class="gb-label gb-types">Plot types</div>
        <div class="gb types-box">
          <div class="type-row d-flex align-items-center"><input class="form-check-input" type="radio" name="pt" checked /><label>Line</label><select class="form-select"><option>xy plot</option></select></div>
          <div class="type-row d-flex align-items-center"><input class="form-check-input" type="radio" name="pt" /><label>Image</label><select class="form-select" disabled><option>xy plot</option></select></div>
          <div class="type-row d-flex align-items-center"><input class="form-check-input grey" type="radio" name="pt" /><label class="muted">Surface</label><select class="form-select" disabled><option>xyz plot</option></select></div>
          <div class="type-row d-flex align-items-center"><input class="form-check-input" type="radio" name="pt" /><label>Vector</label></div>
        </div>
        <div class="gb-label">Plot settings</div>
        <div class="gb settings-box">
          <div class="axis-btns d-flex">
            <button class="btn axis-btn d-flex align-items-center justify-content-center" disabled><span>XY</span></button>
            <button class="btn axis-btn d-flex align-items-center justify-content-center" disabled><span>XZ</span></button>
            <button class="btn axis-btn d-flex align-items-center justify-content-center" disabled><span>YZ</span></button>
            <button class="btn axis-btn d-flex align-items-center justify-content-center" disabled aria-label="Lock"><span><svg width="14" height="14" viewBox="0 0 16 18"><path d="M4 8V5a4 4 0 0 1 8 0v3" fill="none" stroke="#fff" stroke-width="2"/><rect x="2" y="8" width="12" height="8" rx="2" fill="none" stroke="#fff" stroke-width="2"/></svg></span></button>
            <div class="axis-rest"></div>
          </div>
          <div class="set-row d-flex align-items-center muted"><input class="form-check-input chk-on chk-off" type="checkbox" checked disabled />Show axes</div>
          <div class="set-row d-flex align-items-center"><input class="form-check-input boxed" type="checkbox" />Hold Camera</div>
          <div class="set-row d-flex align-items-center"><input class="form-check-input boxed" type="checkbox" />Global Color Range</div>
          <div class="set-row d-flex align-items-center"><input class="form-check-input boxed" type="checkbox" />Lock Color Bar</div>
          <div class="d-flex align-items-center">
            <button class="btn btn-plot redraw">Redraw</button>
            <div class="auto d-flex align-items-center"><input class="form-check-input chk-on" type="checkbox" checked />Auto</div>
          </div>
          <button class="btn btn-plot newwin">Plot in <u>N</u>ew Window</button>
        </div>
      </div>
    </div>

    <div class="bar d-flex align-items-center justify-content-center"><i></i>Attributes</div>
    <div class="pane attrs d-flex">
      <div class="grid-box">
        <table class="table gt">
          <colgroup><col class="c128a" /><col class="c128" /><col class="c128" /><col class="c120" /></colgroup>
          <thead><tr><th>Data set</th><th>Attribute</th><th>Vector operation</th><th class="last">Scalar operation</th></tr></thead>
          <tbody><tr class="s"><td>t2:H</td><td>H</td><td>Magnitude</td><td>Re</td></tr></tbody>
        </table>
        <div class="hbar d-flex"><div class="arrow">&lsaquo;</div><div class="thumb thumb-a"></div><div class="flex-grow-1"></div><div class="arrow">&rsaquo;</div></div>
      </div>
      <div class="gb dup-box">
        <button class="btn btn-dup"><u>D</u>uplicate</button>
        <button class="btn btn-rem" disabled><u>R</u>emove</button>
      </div>
    </div>

    <div class="bar sec-gap d-flex align-items-center justify-content-center"><i></i>Parameters</div>
    <div class="pane params d-flex">
      <div class="grid-box">
        <table class="table gt">
          <colgroup><col class="c104a" /><col class="c104" /><col class="c44" /></colgroup>
          <thead><tr><th>Attribute(s)</th><th>Parameter</th><th class="last">Action</th></tr></thead>
          <tbody>
            <tr class="s"><td>t2:H (H)</td><td>x</td><td>Slice</td></tr>
            <tr class="g"><td>t2:H (H)</td><td>y</td><td>Slice</td></tr>
            <tr class="l"><td>t2:H (H)</td><td>z</td><td>Slice</td></tr>
            <tr class="g"><td>t2:H (H)</td><td>t</td><td>Plot x</td></tr>
          </tbody>
        </table>
        <div class="vbar">
          <svg class="up" width="10" height="6" viewBox="0 0 10 6"><path d="m1 5 4-4 4 4" fill="none" stroke="#222"/></svg>
          <b></b>
          <svg class="dn" width="10" height="6" viewBox="0 0 10 6"><path d="m1 1 4 4 4-4" fill="none" stroke="#222"/></svg>
        </div>
        <div class="hbar d-flex"><div class="arrow">&lsaquo;</div><div class="thumb thumb-p"></div><div class="flex-grow-1"></div><div class="arrow">&rsaquo;</div></div>
        <div class="corner"></div>
      </div>
      <div class="gb par-box"></div>
    </div>
  </div>
</div>

<script>
  // field magnitude lobes, page coordinates: valley, peak, valley, peak...
  var pts = [[311,451.5],[325,449.5],[331,451.3],[343,444.5],[351.5,451.3],[364,421.5],[372.7,449.5],[384.7,365],[393.3,438],[404.3,278],[413.7,434],[423.3,203],[431.7,448.7],[440,182.7],[448.3,416.7],[456.7,219],[465,434],[472.3,286.7],[481,435],[487.3,351.7],[496,445],[502,400],[510.7,448.7],[516.7,430],[525.3,451],[531.7,444],[540,451.3],[547,449.5],[568,451.3]];
  var d = 'M233.7 451.5L311 451.5', i;
  for (i = 1; i < pts.length; i++) {
    var a = pts[i - 1], b = pts[i], dx = b[0] - a[0], dy = b[1] - a[1];
    if (i % 2) d += 'C' + (a[0] + .33 * dx) + ' ' + (a[1] + .51 * dy) + ' ' + (a[0] + .64 * dx) + ' ' + b[1] + ' ' + b[0] + ' ' + b[1];
    else d += 'C' + (a[0] + .36 * dx) + ' ' + a[1] + ' ' + (a[0] + .67 * dx) + ' ' + (a[1] + .49 * dy) + ' ' + b[0] + ' ' + b[1];
  }
  document.getElementById('curve').setAttribute('d', d);
</script>
<script src="https://cdn.jsdelivr.net/npm/bootstrap@5.3.0/dist/js/bootstrap.bundle.min.js"></script>
</body>
</html>
